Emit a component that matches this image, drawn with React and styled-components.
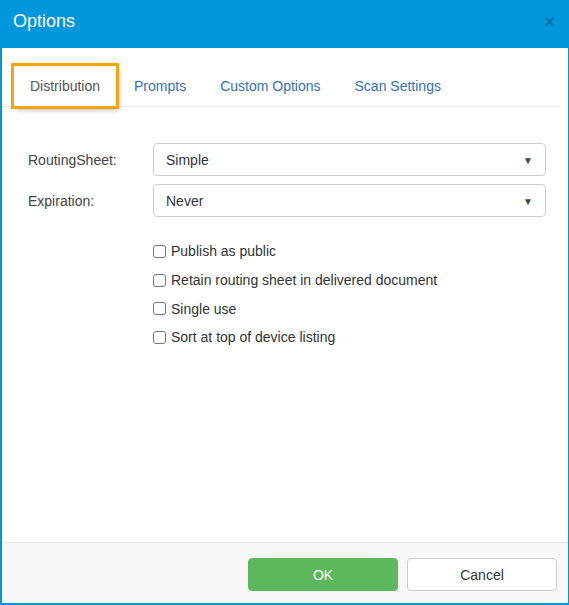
import React from "react";
import styled, { createGlobalStyle } from "styled-components";

const Global = createGlobalStyle`
  html, body {
    margin: 0;
    padding: 0;
    background: #fff;
  }
  body {
    font-family: "Liberation Sans", Arial, sans-serif;
    font-size: 14px;
    color: #333;
  }
  * { box-sizing: border-box; }
`;

const Dialog = styled.div`
  width: 569px;
  height: 605px;
  display: flex;
  flex-direction: column;
  border: 2px solid #0096db;
  border-top: none;
  border-right-width: 1px;
  background: #fff;
`;

const Header = styled.div`
  height: 48px;
  flex: 0 0 48px;
  background: #0096db;
  display: flex;
  align-items: center;
  justify-content: space-between;
  padding: 0 14px 6px 13px;
  margin: 0 -1px 0 -2px;
`;

const Title = styled.h4`
  margin: 0;
  color: #fff;
  font-size: 18px;
  font-weight: normal;
`;

const Close = styled.button`
  border: none;
  background: none;
  padding: 0;
  color: rgba(0, 20, 60, 0.3);
  font-family: "Liberation Sans", Arial, sans-serif;
  font-size: 18px;
  font-weight: bold;
  line-height: 1;
  margin-top: 2px;
  cursor: pointer;
`;

const Body = styled.div`
  flex: 1;
  padding-top: 18px;
`;

const Tabs = styled.ul`
  list-style: none;
  margin: 0 10px 0 0;
  padding: 0 0 0 12px;
  display: flex;
  border-bottom: 1px solid #e9e9e9;
  height: 41px;
`;

const Tab = styled.li`
  height: 40px;
  padding: 0 15px;
  margin-right: 4px;
  display: flex;
  align-items: center;
  color: ${(p) => (p.$active ? "#555" : "#3570b4")};
  background: #fff;
  cursor: pointer;
  ${(p) =>
    p.$active &&
    `
    padding: 0 16px;
    margin-right: 3px;
    outline: 3px solid #f9a40a;
    box-shadow: 2px 3px 6px rgba(0,0,0,0.35);
    position: relative;
    z-index: 1;
  `}
`;

const Form = styled.div`
  padding: 36px 22px 0 26px;
`;

const Row = styled.div`
  display: flex;
  align-items: center;
  margin-bottom: 8px;
`;

const Label = styled.label`
  width: 125px;
  flex: 0 0 125px;
  color: #444;
`;

const SelectBox = styled.div`
  flex: 1;
  height: 33px;
  border: 1px solid #ccc;
  border-radius: 4px;
  display: flex;
  align-items: center;
  justify-content: space-between;
  padding: 0 12px 0 12px;
  color: #333;
`;

const Caret = styled.span`
  font-size: 10px;
  color: #444;
  margin-top: 2px;
`;

const Checks = styled.div`
  padding: 12px 0 0 125px;
  display: flex;
  flex-direction: column;
`;

const CheckRow = styled.label`
  display: flex;
  align-items: center;
  height: 28.7px;
  color: #333;
`;

const Box = styled.span`
  width: 13px;
  height: 13px;
  border: 1px solid #777;
  border-radius: 3px;
  background: #fff;
  margin-right: 5px;
  flex: 0 0 13px;
`;

const Footer = styled.div`
  flex: 0 0 61px;
  border-top: 1px solid #e5e5e5;
  background: #f8f8f8;
  display: flex;
  justify-content: flex-end;
  gap: 9px;
  padding: 15px 11px 0 0;
`;

const Button = styled.button`
  width: 150px;
  height: 33px;
  border-radius: 4px;
  font-family: "Liberation Sans", Arial, sans-serif;
  font-size: 14px;
  cursor: pointer;
  border: 1px solid ${(p) => (p.$primary ? "#5cb85c" : "#ccc")};
  background: ${(p) => (p.$primary ? "#5cb85c" : "#fff")};
  color: ${(p) => (p.$primary ? "#fff" : "#333")};
`;

const tabs = ["Distribution", "Prompts", "Custom Options", "Scan Settings"];
const checks = [
  "Publish as public",
  "Retain routing sheet in delivered document",
  "Single use",
  "Sort at top of device listing",
];

export default function App() {
  return (
    <>
      <Global />
      <Dialog>
        <Header>
          <Title>Options</Title>
          <Close>×</Close>
        </Header>
        <Body>
          <Tabs>
            {tabs.map((t, i) => (
              <Tab key={t} $active={i === 0}>
                {t}
              </Tab>
            ))}
          </Tabs>
          <Form>
            <Row>
              <Label>RoutingSheet:</Label>
              <SelectBox>
                Simple
                <Caret>▼</Caret>
              </SelectBox>
            </Row>
            <Row>
              <Label>Expiration:</Label>
              <SelectBox>
                Never
                <Caret>▼</Caret>
              </SelectBox>
            </Row>
            <Checks>
              {checks.map((c) => (
                <CheckRow key={c}>
                  <Box />
                  {c}
                </CheckRow>
              ))}
            </Checks>
          </Form>
        </Body>
        <Footer>
          <Button $primary>OK</Button>
          <Button>Cancel</Button>
        </Footer>
      </Dialog>
    </>
  );
}
